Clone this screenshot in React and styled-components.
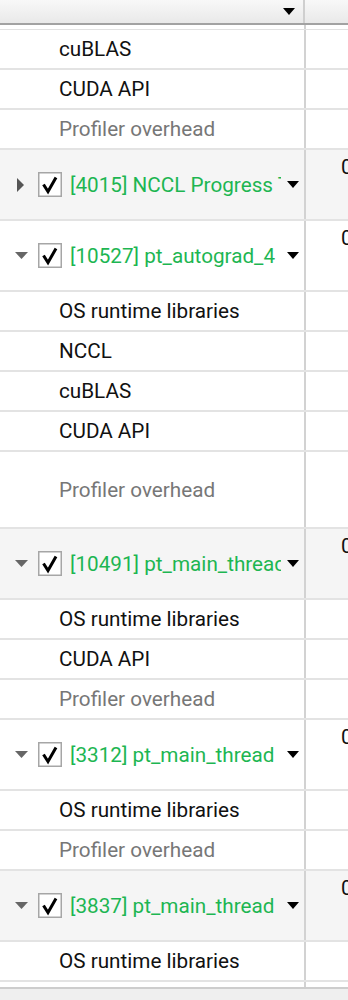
import React from "react";
import styled, { createGlobalStyle } from "styled-components";

const GlobalStyle = createGlobalStyle`
  html, body {
    margin: 0;
    padding: 0;
    background: #ffffff;
    overflow: hidden;
  }
  body {
    font-family: Roboto, "Liberation Sans", sans-serif;
  }
`;

const NAME_WIDTH = 306;
const FONT = "20.7px";

const rows = [
  { kind: "sub", label: "cuBLAS" },
  { kind: "sub", label: "CUDA API" },
  { kind: "sub", label: "Profiler overhead", muted: true },
  { kind: "thread", label: "[4015] NCCL Progress Thread", collapsed: true, shaded: true },
  { kind: "thread", label: "[10527] pt_autograd_4" },
  { kind: "sub", label: "OS runtime libraries" },
  { kind: "sub", label: "NCCL" },
  { kind: "sub", label: "cuBLAS" },
  { kind: "sub", label: "CUDA API" },
  { kind: "sub", label: "Profiler overhead", muted: true, tall: true },
  { kind: "thread", label: "[10491] pt_main_thread", shaded: true },
  { kind: "sub", label: "OS runtime libraries" },
  { kind: "sub", label: "CUDA API" },
  { kind: "sub", label: "Profiler overhead", muted: true },
  { kind: "thread", label: "[3312] pt_main_thread" },
  { kind: "sub", label: "OS runtime libraries" },
  { kind: "sub", label: "Profiler overhead", muted: true },
  { kind: "thread", label: "[3837] pt_main_thread", shaded: true },
  { kind: "sub", label: "OS runtime libraries" },
];

const Table = styled.div`
  width: 348px;
  height: 1000px;
  display: flex;
  flex-direction: column;
  overflow: hidden;
`;

const HeaderRow = styled.div`
  display: flex;
  height: 23px;
  border-bottom: 2px solid #a2a2a2;
  background: linear-gradient(#f8f8f8, #e9e9e9);
`;

const HeaderCell = styled.div`
  width: ${NAME_WIDTH - 1}px;
  flex: none;
  display: flex;
  align-items: center;
  justify-content: flex-end;
  padding-right: 8px;
  box-sizing: border-box;
  border-right: 2px solid #cfcfcf;
`;

const Gap = styled.div`
  display: flex;
  height: 4px;
  border-bottom: 1px solid #e2e2e2;
`;

const Row = styled.div`
  display: flex;
  height: ${(p) => p.$height}px;
  border-bottom: 2px solid #e3e3e3;
  background: ${(p) => (p.$shaded ? "#f5f5f5" : "#ffffff")};
`;

const NameCell = styled.div`
  width: ${NAME_WIDTH}px;
  flex: none;
  box-sizing: border-box;
  border-right: 2px solid #d2d2d2;
  display: flex;
  align-items: center;
  padding-left: ${(p) => (p.$thread ? 14 : 59)}px;
  padding-right: 5px;
  min-width: 0;
`;

const ValueCell = styled.div`
  flex: 1;
  padding: 5px 0 0 35px;
  font-size: ${FONT};
  line-height: 24px;
  color: #111;
  white-space: nowrap;
  overflow: hidden;
`;

const SubLabel = styled.span`
  font-size: ${FONT};
  color: ${(p) => (p.$muted ? "#777777" : "#111111")};
  white-space: nowrap;
`;

const Expander = styled.div`
  width: 14px;
  flex: none;
  display: flex;
  justify-content: center;
  margin-right: 10px;
`;

const CheckBox = styled.svg`
  flex: none;
  margin-right: 8px;
`;

const ThreadLabel = styled.span`
  flex: 1;
  min-width: 0;
  overflow: hidden;
  white-space: nowrap;
  font-size: ${FONT};
  color: #1db652;
  margin-right: 6px;
`;

const Footer = styled.div`
  flex: 1;
  display: flex;
  flex-direction: column;
`;

const FooterGap = styled.div`
  display: flex;
  height: 5px;
`;

const FooterBar = styled.div`
  flex: 1;
  border-top: 2px solid #cdcdcd;
  background: #efefef;
`;

const Divider = styled.div`
  width: ${NAME_WIDTH}px;
  flex: none;
  box-sizing: border-box;
  border-right: 2px solid #d2d2d2;
`;

const DropArrow = () => (
  <svg width="12" height="7" viewBox="0 0 12 7">
    <path d="M0 0 L12 0 L6 7 Z" fill="#000" />
  </svg>
);

const ExpandArrow = ({ collapsed }) =>
  collapsed ? (
    <svg width="8" height="14" viewBox="0 0 8 14">
      <path d="M0 0 L7 7 L0 14 Z" fill="#555" />
    </svg>
  ) : (
    <svg width="13" height="7" viewBox="0 0 13 7">
      <path d="M0 0 L13 0 L6.5 7 Z" fill="#666" />
    </svg>
  );

const Check = () => (
  <CheckBox width="24" height="25" viewBox="0 0 24 25">
    <rect x="0.75" y="0.75" width="22.5" height="23.5" fill="#fff" stroke="#a6a6a6" strokeWidth="1.5" />
    <path d="M5.5 12.5 L10 19.5 L18 5.5" fill="none" stroke="#000" strokeWidth="3" strokeLinejoin="miter" />
  </CheckBox>
);

const TableRow = ({ row }) => {
  if (row.kind === "thread") {
    return (
      <Row $height={69} $shaded={row.shaded}>
        <NameCell $thread>
          <Expander>
            <ExpandArrow collapsed={row.collapsed} />
          </Expander>
          <Check />
          <ThreadLabel>{row.label}</ThreadLabel>
          <DropArrow />
        </NameCell>
        <ValueCell>0</ValueCell>
      </Row>
    );
  }
  return (
    <Row $height={row.tall ? 75 : 38} $shaded={row.shaded}>
      <NameCell>
        <SubLabel $muted={row.muted}>{row.label}</SubLabel>
      </NameCell>
      <ValueCell />
    </Row>
  );
};

export default function App() {
  return (
    <>
      <GlobalStyle />
      <Table>
        <HeaderRow>
          <HeaderCell>
            <DropArrow />
          </HeaderCell>
        </HeaderRow>
        <Gap>
          <Divider />
        </Gap>
        {rows.map((row, i) => (
          <TableRow key={i} row={row} />
        ))}
        <Footer>
          <FooterGap>
            <Divider />
          </FooterGap>
          <FooterBar />
        </Footer>
      </Table>
    </>
  );
}
